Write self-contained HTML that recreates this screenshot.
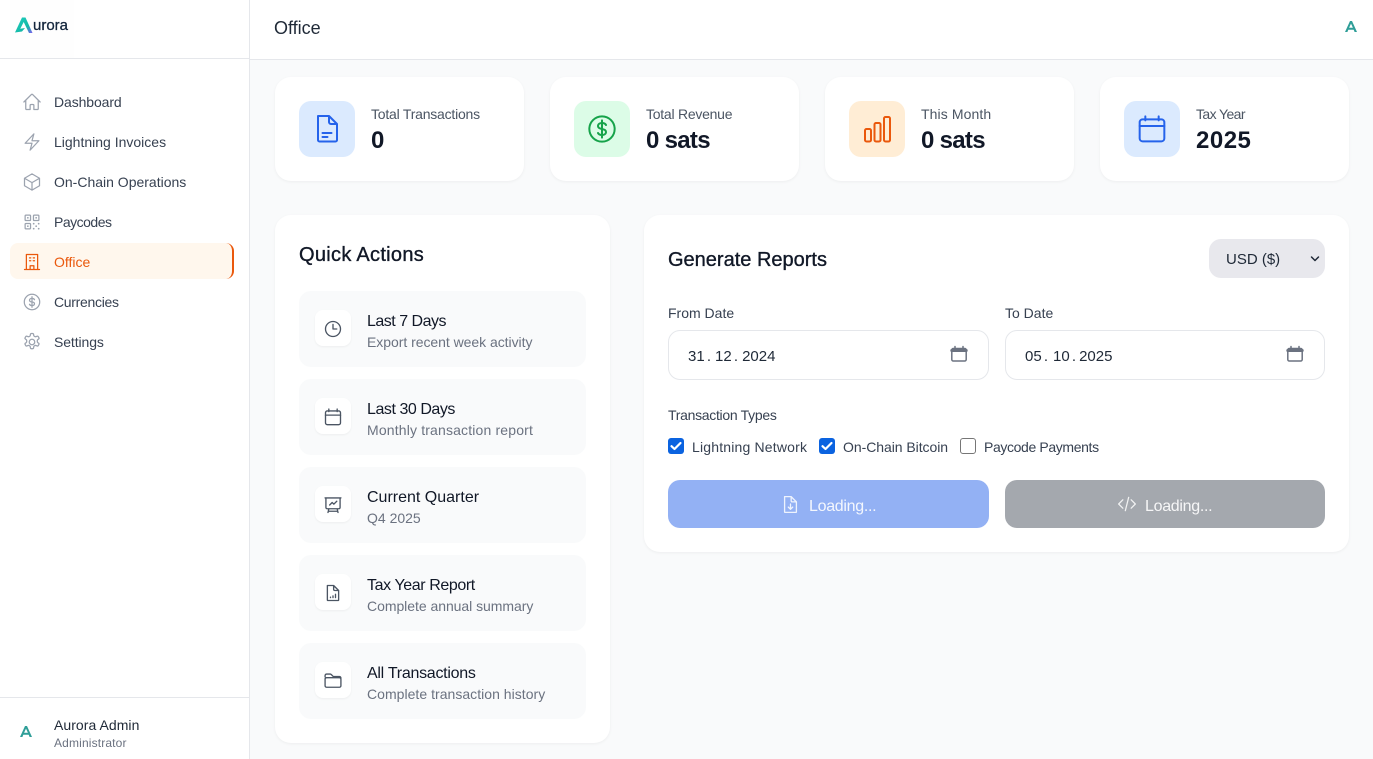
<!DOCTYPE html>
<html><head><meta charset="utf-8"><title>Office</title>
<style>
*{box-sizing:border-box;margin:0;padding:0}
html,body{width:1373px;height:759px;overflow:hidden;background:#f9fafb;font-family:"Liberation Sans",sans-serif;color:#111827}
.a{position:absolute}
.t{position:absolute;white-space:nowrap;line-height:20px}
.card{position:absolute;background:#fff;border-radius:16px;box-shadow:0 1px 3px rgba(0,0,0,.05)}
.nav{font-size:14px;color:#374151;left:54px}
.ic{position:absolute;fill:none;stroke-linecap:round;stroke-linejoin:round}
.si{position:absolute;width:56px;height:56px;border-radius:12px;top:101px}
.sl{font-size:14px;color:#4b5563;top:104px}
.sv{font-size:24px;font-weight:700;color:#111827;top:131px;line-height:20px}
.qa{position:absolute;left:299px;width:287px;height:76px;background:#f9fafb;border-radius:12px}
.qi{position:absolute;left:16px;top:19px;width:36px;height:36px;background:#fff;border-radius:8px;box-shadow:0 1px 2px rgba(0,0,0,.05)}
.qt{font-size:16px;color:#111827;left:367px}
.qs{font-size:14px;color:#6b7280;left:367px}
.lab{font-size:14px;color:#374151}
.inp{position:absolute;height:50px;top:330px;background:#fff;border:1px solid #e5e7eb;border-radius:12px}
.btn{position:absolute;top:480px;height:48px;border-radius:12px}
.cb{position:absolute;top:438px;width:16px;height:16px;border-radius:3px;background:#0b63e0}
</style></head><body>

<div class="a" style="left:0;top:0;width:250px;height:759px;background:#fff;border-right:1px solid #e5e7eb"></div>
<div class="a" style="left:10px;top:0;width:64px;height:58px;background:#fefefe"></div>
<div class="a" style="left:0;top:58px;width:250px;height:1px;background:#e5e7eb"></div>
<div class="a" style="left:0;top:697px;width:250px;height:1px;background:#e5e7eb"></div>
<div class="a" style="left:250px;top:0;width:1123px;height:60px;background:#fff;border-bottom:1px solid #e5e7eb"></div>

<!-- logo -->
<svg class="a" style="left:14px;top:16px" width="20" height="18" viewBox="0 0 20 18">
<defs><linearGradient id="g" x1="0" y1="0" x2="1" y2="1"><stop offset="0" stop-color="#1fd0c0"/><stop offset=".65" stop-color="#14b8a6"/><stop offset="1" stop-color="#7c5cf0"/></linearGradient></defs>
<path d="M1 16.500 8 1.500h3.500L18.500 17 15 17 9.700 6 6.300 12.800 11 12 8 15.500 Z" fill="url(#g)"/></svg>
<div class="t" style="left:33px;top:16px;font-size:15px;color:#14263d;-webkit-text-stroke:.3px #14263d">urora</div>

<!-- nav icons -->
<svg class="ic" style="left:22px;top:92px" width="20" height="20" viewBox="0 0 24 24" stroke="#9ca3af" stroke-width="1.5"><path d="M2.25 12 11.2 3.05a1.13 1.13 0 0 1 1.6 0L21.75 12M4.5 9.75V19.9c0 .6.5 1.1 1.1 1.1H9.75v-4.9c0-.6.5-1.1 1.1-1.1h2.3c.6 0 1.1.5 1.1 1.1V21h4.15c.6 0 1.1-.5 1.1-1.1V9.75"/></svg>
<svg class="ic" style="left:22px;top:132px" width="20" height="20" viewBox="0 0 24 24" stroke="#9ca3af" stroke-width="1.5"><path d="M3.75 13.5 14.25 2.25 12 10.5h8.25L9.75 21.75 12 13.5H3.75Z"/></svg>
<svg class="ic" style="left:22px;top:172px" width="20" height="20" viewBox="0 0 24 24" stroke="#9ca3af" stroke-width="1.5"><path d="M21 7.5 12 2.25 3 7.5m18 0L12 12.75M21 7.5v9L12 21.75M3 7.5l9 5.25M3 7.5v9l9 5.25m0-9v9"/></svg>
<svg class="ic" style="left:22px;top:212px" width="20" height="20" viewBox="0 0 24 24" stroke="#9ca3af" stroke-width="1.5"><rect x="3.75" y="3.75" width="6.5" height="6.5" rx="1"/><rect x="13.75" y="3.75" width="6.5" height="6.5" rx="1"/><rect x="3.75" y="13.75" width="6.5" height="6.5" rx="1"/><path d="M6.75 6.75h.5v.5h-.5zM16.75 6.75h.5v.5h-.5zM6.75 16.75h.5v.5h-.5zM13.75 13.75h.5v.5h-.5zM19.75 13.75h.5v.5h-.5zM16.75 16.75h.5v.5h-.5zM13.75 19.75h.5v.5h-.5zM19.75 19.75h.5v.5h-.5z"/></svg>
<div class="a" style="left:10px;top:243px;width:224px;height:36px;background:#fff7ed;border-radius:8px;border-right:2px solid #ea580c"></div>
<svg class="ic" style="left:22px;top:252px" width="20" height="20" viewBox="0 0 24 24" stroke="#ea580c" stroke-width="1.5"><path d="M3 21h18M5.25 21V3h13.5v18M9.75 21v-4.5h4.5V21M9 7h1.500M13.500 7H15M9 10.500h1.500M13.500 10.500H15"/></svg>
<svg class="ic" style="left:22px;top:292px" width="20" height="20" viewBox="0 0 24 24" stroke="#9ca3af" stroke-width="1.5"><circle cx="12" cy="12" r="9.25"/><path d="M12 5.750v12.500M15 9.200c-.5-1-1.600-1.500-3-1.500-1.700 0-3 .9-3 2.200s1.300 1.900 3 2.100 3 .8 3 2.100-1.300 2.200-3 2.200c-1.400 0-2.500-.5-3-1.500"/></svg>
<svg class="ic" style="left:21px;top:331px" width="22" height="22" viewBox="0 0 24 24" stroke="#9ca3af" stroke-width="1.4"><circle cx="12" cy="12" r="3"/><path d="M10.300 3.600c.1-.5.5-.9 1.100-.9h1.200c.6 0 1 .4 1.100.9l.2 1.300c.1.4.4.7.7.9l.6.3c.3.2.7.2 1.100.1l1.200-.5c.5-.2 1.100 0 1.400.5l.6 1.100c.3.5.2 1.100-.3 1.400l-1 .8c-.3.3-.5.7-.4 1.100v.8c-.1.4.1.8.4 1.100l1 .8c.4.3.6.9.3 1.400l-.6 1.100c-.3.5-.9.7-1.400.5l-1.200-.5c-.4-.1-.8-.1-1.100.1l-.6.3c-.4.2-.6.5-.7.9l-.2 1.300c-.1.5-.5.9-1.100.9h-1.200c-.6 0-1-.4-1.100-.9l-.2-1.300c-.1-.4-.4-.7-.7-.9l-.6-.3c-.3-.2-.7-.2-1.100-.1l-1.200.5c-.5.2-1.100 0-1.400-.5l-.6-1.100c-.3-.5-.2-1.100.3-1.400l1-.8c.3-.3.5-.7.4-1.100v-.8c.1-.4-.1-.8-.4-1.100l-1-.8c-.4-.3-.6-.9-.3-1.400l.6-1.100c.3-.5.9-.7 1.400-.5l1.200.5c.4.1.8.1 1.100-.1l.6-.3c.4-.2.6-.5.7-.9z"/></svg>

<div class="t nav" style="top:92px;letter-spacing:-.1px">Dashboard</div>
<div class="t nav" style="top:132px">Lightning Invoices</div>
<div class="t nav" style="top:172px">On-Chain Operations</div>
<div class="t nav" style="top:212px;letter-spacing:-.5px">Paycodes</div>
<div class="t nav" style="top:252px;color:#ea580c">Office</div>
<div class="t nav" style="top:292px;letter-spacing:-.3px">Currencies</div>
<div class="t nav" style="top:332px;letter-spacing:-.1px">Settings</div>

<!-- user -->
<svg class="a" style="left:19px;top:725px" width="14" height="13" viewBox="0 0 14 13"><path d="M1 12 6 1h2l5 11h-2.400l-.9-2.200H4.300L3.400 12ZM5.100 7.800h3.800L7 3.600Z" fill="#2f9e98"/></svg>
<div class="t" style="left:54px;top:715px;font-size:14px;color:#1f2937;letter-spacing:.05px">Aurora Admin</div>
<div class="t" style="left:54px;top:733px;font-size:12px;color:#6b7280;letter-spacing:.15px">Administrator</div>

<!-- header -->
<div class="t" style="left:274px;top:18px;font-size:18px;color:#1f2937">Office</div>
<svg class="a" style="left:1344px;top:20px" width="14" height="13" viewBox="0 0 14 13"><path d="M1 12 6 1h2l5 11h-2.400l-.9-2.200H4.300L3.400 12ZM5.100 7.800h3.800L7 3.600Z" fill="#2f9e98"/></svg>

<!-- stat cards -->
<div class="card" style="left:275px;top:77px;width:249px;height:104px"></div>
<div class="card" style="left:550px;top:77px;width:249px;height:104px"></div>
<div class="card" style="left:825px;top:77px;width:249px;height:104px"></div>
<div class="card" style="left:1100px;top:77px;width:249px;height:104px"></div>
<div class="si" style="left:299px;background:#dbeafe"></div>
<div class="si" style="left:574px;background:#dcfce7"></div>
<div class="si" style="left:849px;background:#ffedd5"></div>
<div class="si" style="left:1124px;background:#dbeafe"></div>
<svg class="ic" style="left:311px;top:113px" width="32" height="32" viewBox="0 0 32 32" stroke="#2563eb" stroke-width="2"><path d="M7 3h11l8 8v16a1.500 1.500 0 0 1-1.500 1.500h-16A1.500 1.500 0 0 1 7 27zM18 3v6a2 2 0 0 0 2 2h6M11.500 20h9M11.500 24h5"/></svg>
<svg class="ic" style="left:586px;top:113px" width="32" height="32" viewBox="0 0 24 24" stroke="#16a34a" stroke-width="1.500"><circle cx="12" cy="12" r="9.500"/><path d="M12 5.500v13M15 9c-.5-1-1.600-1.500-3-1.500-1.700 0-3 .9-3 2.250S10.300 11.700 12 12s3 .9 3 2.250-1.300 2.250-3 2.250c-1.400 0-2.500-.5-3-1.500"/></svg>
<svg class="ic" style="left:861px;top:113px" width="32" height="32" viewBox="0 0 32 32" stroke="#ea580c" stroke-width="2"><rect x="4" y="16" width="6" height="12.500" rx="1.500"/><rect x="13.500" y="10" width="6" height="18.500" rx="1.500"/><rect x="23" y="4" width="6" height="24.500" rx="1.500"/></svg>
<svg class="ic" style="left:1136px;top:113px" width="32" height="32" viewBox="0 0 24 24" stroke="#2563eb" stroke-width="1.500"><path d="M7 2.500v3M17 2.500v3"/><rect x="2.750" y="4.750" width="18.500" height="16.500" rx="2.200"/><path d="M2.750 9.750h18.500"/></svg>

<div class="t sl" style="left:371px;letter-spacing:-.22px">Total Transactions</div>
<div class="t sv" style="left:371px">0</div>
<div class="t sl" style="left:646px;letter-spacing:-.25px">Total Revenue</div>
<div class="t sv" style="left:646px;letter-spacing:-.7px">0 sats</div>
<div class="t sl" style="left:921px;letter-spacing:.1px">This Month</div>
<div class="t sv" style="left:921px;letter-spacing:-.7px">0 sats</div>
<div class="t sl" style="left:1196px;letter-spacing:-.6px">Tax Year</div>
<div class="t sv" style="left:1196px;letter-spacing:.5px">2025</div>

<!-- quick actions -->
<div class="card" style="left:275px;top:215px;width:335px;height:528px"></div>
<div class="t" style="left:299px;top:245px;font-size:20px;color:#111827;letter-spacing:.3px;-webkit-text-stroke:.35px #111827">Quick Actions</div>

<div class="qa" style="top:291px"><div class="qi"></div></div>
<div class="qa" style="top:379px"><div class="qi"></div></div>
<div class="qa" style="top:467px"><div class="qi"></div></div>
<div class="qa" style="top:555px"><div class="qi"></div></div>
<div class="qa" style="top:643px"><div class="qi"></div></div>

<svg class="ic" style="left:323px;top:319px" width="20" height="20" viewBox="0 0 24 24" stroke="#4b5563" stroke-width="1.600"><circle cx="12" cy="12" r="9"/><path d="M12 6.500V12h4.500"/></svg>
<svg class="ic" style="left:323px;top:407px" width="20" height="20" viewBox="0 0 24 24" stroke="#4b5563" stroke-width="1.600"><path d="M7 2.500v3M17 2.500v3"/><rect x="3" y="4.750" width="18" height="16.500" rx="2.200"/><path d="M3 9.750h18"/></svg>
<svg class="ic" style="left:323px;top:495px" width="20" height="20" viewBox="0 0 24 24" stroke="#4b5563" stroke-width="1.600"><path d="M2.500 3.500h19M3.500 3.500v11.500c0 .8.700 1.500 1.500 1.500h14c.8 0 1.500-.7 1.500-1.500V3.500M7 16.500 6 21M17 16.500l1 4.500M6.300 19.500h11.400M8 12l3-3 2 2 3.500-3.500"/></svg>
<svg class="ic" style="left:323px;top:583px" width="20" height="20" viewBox="0 0 24 24" stroke="#4b5563" stroke-width="1.600"><path d="M5.250 3h7.500l6 6v11.250c0 .4-.350.750-.750.750H6c-.4 0-.750-.350-.750-.750zM12.750 3v4.500c0 .850.650 1.500 1.500 1.500h4.500M9 17.500v-.5M12 17.500v-2M15 17.500v-4"/></svg>
<svg class="ic" style="left:323px;top:671px" width="20" height="20" viewBox="0 0 24 24" stroke="#4b5563" stroke-width="1.600"><path d="M2.500 7V5.500c0-1 .8-1.800 1.800-1.800h4.300c.5 0 .9.200 1.300.5l2 2c.300.300.7.500 1.200.5h6.600c1 0 1.800.8 1.800 1.800M2.500 9.700c0-1 .8-1.700 1.800-1.700h15.400c1 0 1.800.8 1.800 1.700v8c0 1-.8 1.800-1.800 1.800H4.300c-1 0-1.800-.8-1.800-1.800z"/></svg>

<div class="t qt" style="top:312px;letter-spacing:-.5px">Last 7 Days</div>
<div class="t qs" style="top:332px;letter-spacing:-.04px">Export recent week activity</div>
<div class="t qt" style="top:400px;letter-spacing:-.45px">Last 30 Days</div>
<div class="t qs" style="top:420px;letter-spacing:.16px">Monthly transaction report</div>
<div class="t qt" style="top:488px">Current Quarter</div>
<div class="t qs" style="top:508px">Q4 2025</div>
<div class="t qt" style="top:576px;letter-spacing:-.4px">Tax Year Report</div>
<div class="t qs" style="top:596px;letter-spacing:-.04px">Complete annual summary</div>
<div class="t qt" style="top:664px;letter-spacing:-.27px">All Transactions</div>
<div class="t qs" style="top:684px;letter-spacing:.03px">Complete transaction history</div>

<!-- reports -->
<div class="card" style="left:644px;top:215px;width:705px;height:337px"></div>
<div class="t" style="left:668px;top:250px;font-size:20px;color:#111827;-webkit-text-stroke:.35px #111827">Generate Reports</div>
<div class="a" style="left:1209px;top:239px;width:116px;height:39px;background:#e8e8ed;border-radius:12px"></div>
<div class="t" style="left:1226px;top:250px;font-size:15px;color:#1f2937">USD ($)</div>
<svg class="ic" style="left:1310px;top:255px" width="10" height="8" viewBox="0 0 10 8" stroke="#1f2937" stroke-width="1.500"><path d="M1.500 2 5 5.500 8.500 2"/></svg>

<div class="t lab" style="left:668px;top:303px">From Date</div>
<div class="t lab" style="left:1005px;top:303px">To Date</div>
<div class="inp" style="left:668px;width:321px"></div>
<div class="inp" style="left:1005px;width:320px"></div>
<div class="t" style="left:688px;top:347px;font-size:15px;color:#1f2937">31<span style="margin:0 4px 0 2.200px">.</span>12<span style="margin:0 4px 0 2.200px">.</span>2024</div>
<div class="t" style="left:1025px;top:347px;font-size:15px;color:#1f2937">05<span style="margin:0 5px 0 2.200px">.</span>10<span style="margin:0 3px 0 2.200px">.</span>2025</div>
<svg class="ic" style="left:950px;top:345px" width="18" height="18" viewBox="0 0 18 18" stroke="#6b7280" stroke-width="1.500"><path d="M5 1.500v2.500M13 1.500v2.500"/><rect x="1.800" y="3.500" width="14.400" height="12.500" rx="1.500"/><path d="M1.800 5.500h14.400" stroke-width="3"/></svg>
<svg class="ic" style="left:1286px;top:345px" width="18" height="18" viewBox="0 0 18 18" stroke="#6b7280" stroke-width="1.500"><path d="M5 1.500v2.500M13 1.500v2.500"/><rect x="1.800" y="3.500" width="14.400" height="12.500" rx="1.500"/><path d="M1.800 5.500h14.400" stroke-width="3"/></svg>

<div class="t lab" style="left:668px;top:405px;letter-spacing:-.3px">Transaction Types</div>
<div class="cb" style="left:668px"></div>
<svg class="ic" style="left:668px;top:438px" width="16" height="16" viewBox="0 0 16 16" stroke="#fff" stroke-width="2.200"><path d="M3.500 8.200 6.500 11 12.500 5"/></svg>
<div class="cb" style="left:819px"></div>
<svg class="ic" style="left:819px;top:438px" width="16" height="16" viewBox="0 0 16 16" stroke="#fff" stroke-width="2.200"><path d="M3.500 8.200 6.500 11 12.500 5"/></svg>
<div class="cb" style="left:960px;background:#fff;border:1px solid #767676"></div>
<div class="t lab" style="left:692px;top:437px;letter-spacing:.18px">Lightning Network</div>
<div class="t lab" style="left:843px;top:437px;letter-spacing:-.05px">On-Chain Bitcoin</div>
<div class="t lab" style="left:984px;top:437px;letter-spacing:-.37px">Paycode Payments</div>

<div class="btn" style="left:668px;width:321px;background:#93b1f4"></div>
<div class="btn" style="left:1005px;width:320px;background:#a4a8ae"></div>
<svg class="ic" style="left:780px;top:494px" width="21" height="21" viewBox="0 0 24 24" stroke="#fff" stroke-width="1.500" opacity=".85"><path d="M5.250 3h7.500l6 6v11.250c0 .4-.350.750-.750.750H6c-.4 0-.750-.350-.750-.750zM12.750 3v4.500c0 .850.650 1.500 1.500 1.500h4.500M12 11.500v6M9.500 15l2.500 2.500 2.500-2.500"/></svg>
<svg class="ic" style="left:1117px;top:494px" width="20" height="20" viewBox="0 0 24 24" stroke="#fff" stroke-width="1.500" opacity=".85"><path d="M7 7 2 12l5 5M17 7l5 5-5 5M14 4l-4 16"/></svg>
<div class="t" style="left:809px;top:497px;font-size:16px;color:#fff;opacity:.9;letter-spacing:-.3px">Loading...</div>
<div class="t" style="left:1145px;top:497px;font-size:16px;color:#fff;opacity:.9;letter-spacing:-.3px">Loading...</div>

</body></html>
